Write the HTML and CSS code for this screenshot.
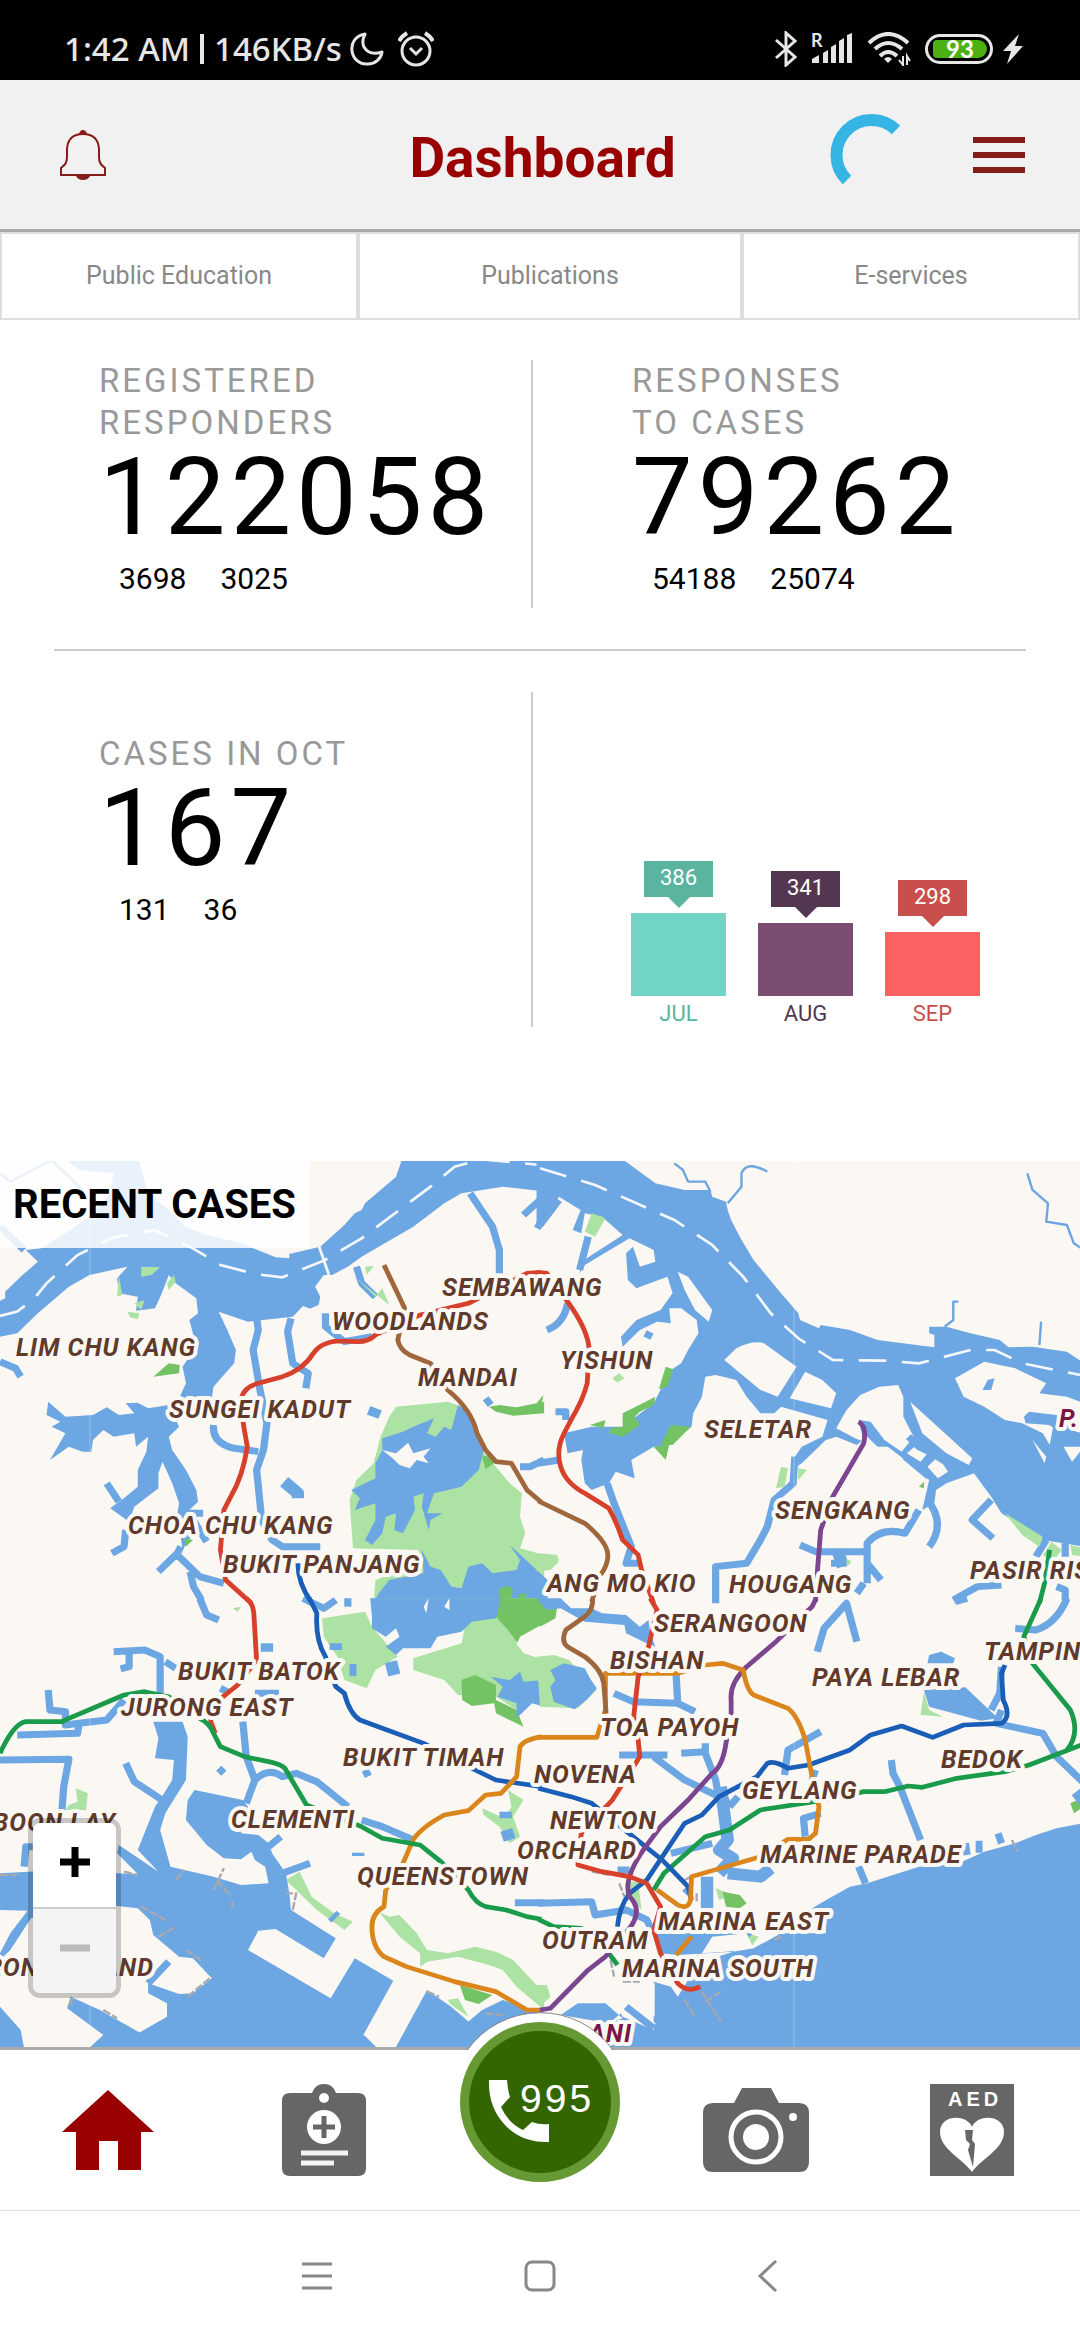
FILE: index.html
```html
<!DOCTYPE html>
<html lang="en">
<head>
<meta charset="utf-8">
<meta name="viewport" content="width=device-width, initial-scale=1">
<title>Dashboard</title>
<link rel="stylesheet" href="styles.css">
</head>
<body>
<div class="statusbar">
  <div class="statusbar-group statusbar-left">
    <span>1:42 AM</span><span class="statusbar-rule"></span><span>146KB/s</span>
    <svg width="34" height="34" viewBox="0 0 34 34" aria-hidden="true"><path d="M15 2C5 4 1 11 2 19c1 8 8 14 16 13 7 0 13-5 14-12-9 3-15 0-18-5-2-4-1-9 1-13z" fill="none" stroke="#e6e6e6" stroke-width="3" stroke-linejoin="round"/></svg>
    <svg class="alarm" width="36" height="36" viewBox="0 0 36 36" aria-hidden="true"><g fill="none" stroke="#e6e6e6" stroke-width="3"><circle cx="18" cy="20" r="14"/><path d="M1 10Q4 5 9 2M27 2q5 3 8 8" stroke-width="4"/><path d="M12 17l6 6 6-6"/></g></svg>
  </div>
  <div class="statusbar-group statusbar-right">
    <svg width="22" height="36" viewBox="0 0 22 36" aria-hidden="true"><path d="M1 9l19 17-9 8V2l9 8L1 27" fill="none" stroke="#e6e6e6" stroke-width="3"/></svg>
    <svg class="signal" width="42" height="32" viewBox="0 0 42 32" aria-hidden="true"><path d="M1 26l7-4v8H1zM12 20l5-3v13h-5zM20 14l5-3v19h-5zM28 8l5-3v25h-5zM36 2l5-2v30h-5z" fill="#e6e6e6"/><text x="0" y="14" font-size="18">R</text></svg>
    <svg class="wifi" width="44" height="34" viewBox="0 0 44 34" aria-hidden="true"><g fill="none" stroke="#e6e6e6" stroke-width="4"><path d="M2 11Q21-7 41 11M8 17q13-12 27 0M13 24q8-8 17 0"/></g><path d="M17 27q4-4 8 0l-4 4z" fill="#e6e6e6"/><path d="M36 24v9l-4-5M40 33v-9l3 5" fill="none" stroke="#e6e6e6" stroke-width="2"/></svg>
    <span class="battery"><span class="battery-fill">93</span></span>
    <svg class="bolt" width="20" height="30" viewBox="0 0 20 30" aria-hidden="true"><path d="M16 0L0 17h8L4 30l16-18h-8z" fill="#e6e6e6"/></svg>
  </div>
</div>

<header class="header">
  <button class="icon-button" aria-label="Notifications">
    <svg width="46" height="50" viewBox="0 0 46 50"><path d="M7 27V19Q8 4 23 4t16 15v8c0 6 2 8 6 11v7H1v-7c4-3 6-5 6-11z" fill="none" stroke="#851c17" stroke-width="2"/><path d="M19 4q1-4 4-4t4 4zM16 46h14q-2 4-7 4t-7-4z" fill="#851c17"/></svg>
  </button>
  <h1 class="title">Dashboard</h1>
  <div class="header-actions">
    <svg width="82" height="82" viewBox="0 0 82 82" role="img" aria-label="Loading"><path d="M66 16A35 35 0 0 0 17 66" fill="none" stroke="#36b5e5" stroke-width="12"/></svg>
    <button class="icon-button" aria-label="Menu">
      <svg width="52" height="36" viewBox="0 0 52 36"><path d="M0 3h52M0 18h52M0 33h52" stroke="#851c17" stroke-width="6"/></svg>
    </button>
  </div>
</header>

<nav class="tabs">
  <a class="tab" href="#education">Public Education</a>
  <a class="tab" href="#publications">Publications</a>
  <a class="tab" href="#services">E-services</a>
</nav>

<main>
<section class="stats">
  <div class="stats-row">
    <div class="stat stat-divided">
      <h2 class="stat-label">REGISTERED<br>RESPONDERS</h2>
      <p class="stat-value">122058</p>
      <p class="stat-parts"><span>3698</span><span>3025</span></p>
    </div>
    <div class="stat">
      <h2 class="stat-label">RESPONSES<br>TO CASES</h2>
      <p class="stat-value">79262</p>
      <p class="stat-parts"><span>54188</span><span>25074</span></p>
    </div>
  </div>
  <hr class="rule">
  <div class="stats-row">
    <div class="stat stat-divided stat-cases">
      <h2 class="stat-label">CASES IN OCT</h2>
      <p class="stat-value">167</p>
      <p class="stat-parts"><span>131</span><span>36</span></p>
    </div>
    <div class="chart">
      <div class="month jul"><span class="tip">386</span><span class="bar" style="height:83px"></span><span class="month-name">JUL</span></div>
      <div class="month aug"><span class="tip">341</span><span class="bar" style="height:73px"></span><span class="month-name">AUG</span></div>
      <div class="month sep"><span class="tip">298</span><span class="bar" style="height:64px"></span><span class="month-name">SEP</span></div>
    </div>
  </div>
</section>

<section class="map">
<svg class="map-canvas" viewBox="0 0 1080 886" role="img" aria-label="Map of recent cases in Singapore">
  <rect width="1080" height="886" fill="#fbf8f3"/>
  <!-- north-west -->
  <g transform="translate(0 -11) scale(.3444 .3333)">
    <path class="water" d="M180 20L230 60 330 70 320 130 260 200 190 250 120 295 75 300 110 335 60 380 15 425 15 445 0 452V560L50 550 110 490 200 410 260 375 370 350 340 385 345 430 400 440 395 482 450 475 470 430 490 375 510 400 570 445 575 490 550 510 570 590 530 650 540 700 520 745 615 745 620 710 680 640 685 600 660 540 635 485 720 515 850 500 880 468 900 476 925 465 930 440 915 410 940 375 965 375 1010 350 1050 320 1200 230 1290 160 1340 130 1460 110 1590 125V20H1170L1150 80 1060 160 1050 180 1030 190 1000 225 930 290 840 312 840 325 800 322 700 280 600 255 540 230 490 180 430 130 400 20z"/>
    <path class="water" d="M140 755L190 800 270 795 310 772 345 795 390 790 365 760 400 758 430 775 490 765 520 830 490 860 500 900 540 960 570 1020 575 1055 540 1090 555 1160 530 1200 515 1090 520 1060 500 1000 472 935 460 970 460 1015 390 1070 375 1115 320 1075 365 1040 400 1010 400 960 425 905 430 860 395 890 390 850 330 860 300 840 270 870 265 905 240 905 200 890 145 930 190 850 150 830 175 815 135 795z"/>
    <path class="stream" d="M310 1000L345 1055M365 1140L360 1190 325 1210M545 1090H590M555 1100L600 1175M525 1190L515 1210 460 1265M515 1215L580 1280 650 1300M552 1265L562 1310 585 1350M745 505L750 540 735 600 755 720 775 820 765 900 745 960 760 1110 790 1170 820 1190H930M845 505L835 545 850 640 895 670 888 715M620 825Q615 880 680 895L750 905M1365 130L1430 230 1450 300V370M1035 350L1050 400 1090 440M1568 150L1520 195M1575 205L1560 235M0 635L45 655 60 680M1410 745L1425 765M1510 950H1540L1580 930M945 490V530L1000 575 1080 560M0 230L70 300"/>
    <path class="stream wide" d="M825 995L865 1030V1045M1092 775L1082 800"/>
    <path class="stream fine" d="M0 70L30 95 150 30 240 120"/>
    <path class="park" d="M1150 770L1300 755 1340 770 1380 830 1400 900 1440 950 1480 1000 1515 1030 1510 1100 1525 1150 1510 1195 1580 1215V1360H1085L1090 1290 1220 1240 1215 1200 1025 1195 1015 1050 1035 990 1085 940 1105 860 1130 800zM410 350L465 352 440 375 410 380zM345 375L340 440 355 435zM485 400L505 375 510 395 490 420zM370 485L405 490 400 508 378 502zM390 460L420 450 410 480zM1060 350L1085 348 1065 375zM1100 430L1130 465M1035 385L1130 465 1110 415 1090 440z"/>
    <path class="water" d="M1200 830L1260 805 1240 850 1265 860 1290 830 1310 840 1330 765 1365 790 1405 900 1390 960 1340 1010 1300 1020 1260 1030 1240 1090 1285 1090 1250 1110 1245 1140 1225 1070 1230 1030 1200 1040 1205 1080 1170 1150 1145 1140 1150 1090 1120 1100 1110 1150 1080 1185 1060 1170 1090 1110 1090 1060 1030 1080 1045 1045 1020 1020 1090 985 1090 940 1110 900 1110 865 1170 845z"/>
    <path class="land" d="M1110 900L1150 910 1185 878 1200 910 1250 895 1230 920 1245 940 1210 930 1190 955 1160 945 1140 925z"/>
    <path class="water" d="M1130 1290L1230 1270 1225 1200 1250 1250 1280 1260 1310 1310 1340 1315 1360 1250 1400 1240 1430 1270 1500 1260 1510 1230 1480 1185 1590 1290V1365H1080L1100 1330z"/>
    <path class="forest" d="M1450 1315L1480 1308 1490 1325 1480 1355H1450zM1500 1335L1530 1330 1520 1355zM1420 770L1450 765 1500 772 1580 755V790L1490 797 1440 785zM1400 920L1420 915 1440 935 1410 958zM445 680L490 640 522 645 520 670zM535 1165L560 1170 540 1190z"/>
    <path class="lane" d="M0 498L50 485 100 445 135 400 225 315 330 262 450 240 560 295 640 345 740 372 820 382 940 332 1050 265 1250 110 1320 50 1400 28 1568 45"/>
    <path class="lane causeway" d="M925 285L955 375"/>
  </g>
  <!-- north-east -->
  <g transform="translate(540 -11) scale(.3444 .3333)">
    <path class="water" d="M-10 20H230L335 100 420 120 495 120 500 140 540 155 545 180 555 210 580 260 620 330 700 430 750 490 755 510 810 535 815 525 900 540 980 570 1145 592V555L1130 550V530H1180L1250 550 1335 570 1360 592 1430 590 1530 605 1580 640V1190L1520 1180 1460 1170 1340 1090 1310 1040 1260 970 1180 1000 1150 1020 1145 1060 1110 1080 1130 990 1060 930 1010 890 980 890 950 860 920 885 860 860 830 870 760 940 745 950 740 920 760 890 820 860 835 810 700 770 680 790 640 790 600 740 570 690 510 675 480 680 470 740 445 790 440 830 370 890 330 890 265 930 275 985 220 965 200 1000 150 1020 130 1000 120 930 125 900 80 910 70 850 150 830 240 830 330 760 380 660 410 640 430 600 460 550 455 510 410 475 375 475 380 520 340 515 290 540 240 590 235 560 280 510 350 480 385 430 370 380 280 415 255 390 250 310 270 290 290 350 335 335 330 300 260 265 130 345 115 370 120 335 240 255 180 200 130 190 120 250 95 240 118 180 55 140 0 230H-10z"/>
    <path class="land" d="M400 365L430 380 500 480 490 515 450 480 420 420zM535 630L570 595Q620 570 650 580L745 650 690 740 640 720zM770 665L820 690 860 730 845 775 725 745zM860 835L890 780 930 735 985 710 1040 705 1055 740V800L1085 860 1050 905 1000 870 960 815 925 810 940 875 915 865zM1075 755L1255 925 1245 945 1180 910 1110 850zM1100 880L1125 910 1105 935 1065 910zM1155 920L1185 965 1155 985 1125 950zM1205 685L1290 635 1380 655 1470 700 1450 730 1530 740 1580 760V850L1490 830 1480 885 1460 850 1400 820 1350 810 1290 770 1230 740zM1430 870L1470 920 1465 940zM1520 890L1545 935 1580 890z"/>
    <path class="water" d="M1300 690L1320 685 1310 720 1285 720zM1405 800L1420 785 1500 795 1560 850 1520 860 1480 825 1410 820z"/>
    <path class="stream" d="M195 1000L215 1060 265 1190 250 1240H290M-5 940L55 930M45 785H75L75 810M20 540Q70 520 80 460M55 150L0 225M140 260L115 360M740 920L735 1000 680 1050 660 1130 640 1170 600 1240 510 1250V1360M755 1185L800 1205H940M845 1240H890M950 1300V1180Q990 1130 1060 1150L1100 1080M1125 1050Q1180 1120 1130 1190M950 1240L990 1290M940 1300L920 1330M1310 1050L1255 1110 1315 1165M1200 1350L1270 1310 1340 1305M1500 1310L1525 1320V1350M1470 1170L1440 1220M1525 1180V1220M1070 860L1100 890 1140 910 1170 930 1240 960M1060 920L1130 980M305 550L325 560"/>
    <path class="stream wide" d="M865 1205L880 1250"/>
    <path class="stream fine" d="M660 65Q600 30 585 70V110L545 160M390 40L415 60 430 95 480 95 495 125M1415 70L1430 120 1475 160 1470 215 1530 225 1550 280 1580 300M1215 455H1200V510L1175 530M1455 515L1450 585"/>
    <path class="park" d="M150 190L190 205 160 260 130 245zM700 950L720 955 710 1010 685 1015zM750 955L775 960 750 990zM1350 1090L1460 1160 1450 1190 1400 1155zM1485 1175L1515 1200 1490 1235 1460 1215zM1540 1185L1580 1195V1220L1545 1215zM0 1210L50 1215 55 1235 30 1260-10 1265zM210 685L230 670 245 685 225 698zM890 1225L905 1235 890 1250z"/>
    <path class="forest" d="M365 650L387 658 370 710 345 718zM335 740L330 765 290 785 275 800 290 825 240 860 200 850 205 835 240 830 240 790zM380 825L438 830 385 885 350 885zM330 890L375 885 365 930zM145 825L190 810 185 835zM1100 1010L1115 995V1015zM-10 760L10 735 0 785z"/>
    <path class="lane" d="M0 55L160 105 390 210 500 285 590 380 670 490 750 565 850 630 1000 632 1100 640 1250 600 1320 600 1400 640 1568 675"/>
  </g>
  <!-- south-west -->
  <g transform="translate(0 439) scale(.3444 .3333)">
    <path class="park" d="M935 55L1060 35 1080 80 1130 140 1155 170 1090 210 1065 265 1000 240 980 170 940 110zM1080-5H1580V70L1500 130 1520 160 1580 180V260L1500 330 1440 290 1330 285 1290 240 1200 210V175L1340 130 1350 80 1090 30zM200 615L225 605 220 565 255 580 250 630H190zM830 840L870 815 905 890 970 940 1025 965 1000 990 920 930zM1100 935L1130 950 1160 945 1210 1000 1240 1050 1300 1060 1380 1040 1440 1055 1490 1080 1580 1180V1230L1500 1160 1460 1110 1420 1095 1330 1070 1240 1085 1220 1100 1220 1060 1160 1010zM1400 625L1465 655 1485 620 1475 570 1520 600 1490 650 1510 710 1480 730 1450 680 1405 645zM1300 1200L1330 1195 1360 1250 1310 1215zM675 25L700 20 690 35z"/>
    <path class="forest" d="M1440-5H1580V80L1500 125 1475 90 1440 50zM1340 240L1380 225 1440 255 1440 300 1500 330 1520 380 1440 340 1435 310 1370 318 1342 300zM1335 1155L1430 1185 1390 1212 1350 1200z"/>
    <path class="water" d="M1075-5L1080 50 1080 85 1120 110 1150 85 1160 110 1120 140 1150 165 1170 145 1250 145 1270 110 1340 95 1370 65 1440 55 1455-5zM1425 230L1480 240 1510 215 1520 245 1580 240V320L1545 310 1500 355 1500 310 1445 290 1460 260z"/>
    <path class="land" d="M1230 20L1245-5 1238 40zM1290 20L1305-5V30zM1580 70L1510 110 1500 135 1530 160 1580 165z"/>
    <path class="water" d="M0 820L140 812 400 822 340 760 345 735 460 815 400 750 450 620 470 590 500 540 505 480 450 475 460 415 445 365H530L545 410 540 540 480 640 465 690 495 800 620 830 700 855 780 850 770 800 740 780 730 755 700 778 650 775 600 735 540 660 545 600 565 570 705 600 720 620 700 700 750 705 780 730 790 760 830 820 840 880 845 930 975 1015 940 1075 800 987 750 992 720 1050 960 1195 1030 1075 1142 1142 1055 1305 1130 1350H1145L1240 1170 1310 1220 1360 1265 1400 1230 1460 1200 1580 1240V1400H0z"/>
    <path class="land" d="M0 930L80 932 30 1000 0 1060zM1055 1303L1100 1300 1150 1330 1138 1360H1110zM90 955L30 1050 0 1080V1220L60 1290 80 1400H200L300 1305 195 1225 205 1190 290 1230 405 1298 485 1250V1210L430 1180V1150L520 1182 560 1180 615 1135 560 1075 520 1070 445 1005 435 960 400 925 340 918z"/>
    <path class="stream" d="M330 155L420 150 465 170V280M375 160V200L350 207M140 270L145 330 190 335V375L230 370 310 360 360 300M50 405L225 400 230 370M0 480L200 478 185 560 180 630M365 490L390 545 470 600M705 365L715 470 740 540 715 610M740 540Q780 500 820 530L860 520 920 545 1010 620M1050 660L1110 680 1200 720M580-5L600 45 635 60M820 820L900 790M780 740L815 710M1495 908H1580M635 520L650 505M1055 525L1075 515M70 800L75 740H95M430 1150L490 1085M880-5L940 25 975 0M1010-5V20M480 185L510 205M640 265L660 275M740 280H810"/>
    <path class="stream wide" d="M775 130V155M975 130V150M1015 210H1035M1135 185L1145 225M1470 690L1480 720M1468 635V655M965 945L975 955M1040 758V768"/>
    <path class="pier" d="M0 825L50 825M360 815L400 825M510 840L535 810M620 870L650 805M630 840L670 890M675 905V925M410 920L480 960M460 1010L510 980M540 1050L590 1085M545 1190L615 1130M850 930L860 880 830 880M210 1195L200 1220M300 1230L340 1255M1240 1175L1275 1190M1410 1240L1460 1245"/>
  </g>
  <!-- south-east -->
  <g transform="translate(540 439) scale(.3444 .3333)">
    <path class="park" d="M-10 170L40 165 85 180 120 225 165 270 110 325 0 320zM510 865L560 885 520 900zM600 1000L635 1010 610 1045 590 1030zM455 1070L470 1020 495 1010 480 1040zM1115 275L1130 330 1170 350 1105 345zM-10 1155L20 1155 30 1190 0 1220zM255 845H285L295 930 270 900z"/>
    <path class="forest" d="M530 875L580 885 600 910 580 925 540 920zM-10 20L50 20 45 55 0 80zM1540 610L1580 590V620L1550 640z"/>
    <path class="water" d="M30 210L70 190 130 205 145 235 165 265 135 300 100 328 40 305 30 260 45 240zM-10-5H60L90 25 150 25 180 40 250 45 290 80 315 60 320 100 335 140 300 125 250 100 245 75 130 65 60 25 20 30zM1130 165L1165 155 1205 175 1200 190H1125zM1115 270L1235 262 1310 335 1330 355 1280 362 1130 320zM1600 665L1500 685 1440 705 1380 730 1290 755 1215 790 1100 800 950 850 900 860 840 895 790 925 830 950V1000H700L620 1045 560 1055 460 1090 400 1190 380 1160 330 1145V1285L250 1225 265 1215 200 1270 60 1245 110 1210H190L240 1255 150 1290 150 1400H1600zM330 1000H620L560 1055 400 1065 350 1060z"/>
    <path class="land" d="M500 1010L600 1000 620 1045 540 1055 470 1060zM240 1250L330 1290 335 1270 280 1220 300 1215 333 1250V1150H220V1210z"/>
    <path class="stream" d="M230 465H370M330 470L420 540 500 580 540 600V740M410 460L480 455V430M480 460L510 540 520 600M550 620L575 590M710 525L720 450 815 395M800 510L790 540M770 710L765 655 815 640M215 280L270 305 400 310 450 335M395 220L400 310M805 155L825 85 890 10 920 125M1340 330L1325 370 1460 400 1500 470 1575 545M1340 200L1335 280 1310 330M1380 85L1440 90Q1500 70 1530-5M1020 480L1025 520 1045 560 1105 720M925 800L945 850M1235 730L1240 765M1330 700L1340 730M-5 910L150 905 160 945 250 930 310 960 330 1000M380 760L500 730M420 880L430 870M250 1220L330 1285M1205 5L1240-5M225 810H260"/>
    <path class="stream wide" d="M525 560L545 720 520 750 560 775 520 820M545 820L640 830 670 805M485 830V925M1265 740H1285M1555 600L1580 580"/>
    <path class="pier" d="M440 830L420 840M455 880V910M150 815L200 825M230 850L245 890M205 1080L215 1130M240 1145H290M420 1200L450 1250M470 1175L525 1265M480 1205L525 1175M1370 720L1388 755M680 1020L700 1010"/>
  </g>
  <!-- tile seams -->
  <path d="M90 0V886M794 0V886" stroke="#fff" stroke-opacity=".3" fill="none"/>
  <!-- rail lines, upper half -->
  <g class="rail" transform="translate(0 -11) scale(.3444 .3333)">
    <path class="nsl" d="M1568 367L1530 370 1360 460 1220 495 1090 555Q1070 575 1040 575L980 573Q930 578 910 610 880 660 820 680L750 700Q710 710 700 745L707 825 718 890Q705 980 670 1040L650 1080 640 1200 655 1290 730 1360"/>
    <path class="tel" d="M1115 345L1175 475 1155 570Q1160 600 1190 615L1250 640 1300 720Q1370 780 1385 850L1410 900 1440 935 1485 940 1530 1020 1572 1057"/>
    <path class="dtl" d="M865 1240Q865 1300 903 1355"/>
  </g>
  <g class="rail" transform="translate(540 -11) scale(.3444 .3333)">
    <path class="nsl" d="M-5 367L20 370 80 455Q140 540 143 600L137 700Q125 750 90 810L70 850Q45 900 60 950 75 1000 130 1030L200 1075Q220 1110 240 1170L285 1215 295 1260 330 1360"/>
    <path class="tel" d="M-5 1053L130 1120Q200 1180 197 1220 195 1250 175 1275L150 1355"/>
    <path class="nel" d="M925 815Q950 830 940 880L850 1040 815 1140 805 1270 800 1355"/>
    <path class="ewl" d="M1480 1200L1465 1300 1450 1360"/>
  </g>
  <!-- rail lines, lower half -->
  <g class="rail" transform="translate(0 439) scale(.3444 .3333)">
    <path class="nsl" d="M715-5Q735 10 737 40L745 180 690 255 612 320V365L625 400"/>
    <path class="dtl" d="M898-5L920 40Q915 120 945 170L975 260 1000 280Q1015 340 1045 360L1230 430 1380 510 1440 540 1572 560"/>
    <path class="ccl" d="M1572 410Q1520 420 1510 440L1500 530 1455 580 1410 585 1360 632 1290 645Q1210 690 1195 730L1170 790 1120 870 1115 920Q1080 940 1080 980 1080 1040 1115 1070L1180 1100 1320 1145 1440 1175 1530 1230H1572"/>
    <path class="ewl" d="M0 460Q40 370 75 365L180 365 200 355 360 285 420 275 490 290 580 355Q610 370 620 400L640 440 710 470 780 485Q825 495 830 510L890 615 1050 680 1110 715 1220 735 1280 785 1360 870Q1380 910 1410 920L1470 930 1530 950 1572 958"/>
  </g>
  <g class="rail" transform="translate(540 439) scale(.3444 .3333)">
    <path class="ewl" d="M-5 958L40 980 120 985 200 1060 225 1095M330 870L360 820 480 710 550 690 640 630 830 600 940 575 1000 575 1070 558 1110 562 1210 535 1350 515 1420 495 1572 435M1455-5L1405 110 1430 190 1540 330Q1570 400 1530 450"/>
    <path class="dtl" d="M-5 565L90 590 150 610 270 710 355 780 430 860 440 900M225 980Q230 920 260 880L310 840 420 670 470 645 520 590 630 530 660 490Q680 480 720 505L780 495 900 450 960 405 1050 378 1140 412 1230 375 1340 370Q1370 350 1345 300L1340 220 1350 195"/>
    <path class="nel" d="M802-5L790 20 680 130 600 200Q550 250 555 300V340L540 430Q530 500 500 520L430 600 350 680 300 750Q240 840 260 890 300 930 260 985L190 1070 140 1110 30 1225 0 1230"/>
    <path class="ccl" d="M-5 412H165L190 330V220L400 220 480 195 530 190 590 210Q600 270 620 285L720 325Q750 350 770 420L790 530 810 620 800 700 780 718 720 718 640 770 540 800 440 830 437 900Q430 930 400 915L340 870M440 1010L395 1065"/>
    <path class="tel" d="M153-5Q155 30 130 50L75 90Q60 125 80 140L130 170Q180 210 185 250L192 340"/>
    <path class="nsl" d="M320-5L340 30 315 140 285 230 272 350 285 420 290 470 210 600 120 700 110 795 180 815 260 830 310 850 350 920 330 990 350 1060 400 1150Q430 1180 465 1160"/>
  </g>
  <g class="place">
    <text x="16" y="195">LIM CHU KANG</text><text x="169" y="257">SUNGEI KADUT</text><text x="128" y="373">CHOA CHU KANG</text><text x="223" y="412">BUKIT PANJANG</text>
    <text x="442" y="135">SEMBAWANG</text><text x="332" y="169">WOODLANDS</text><text x="418" y="225">MANDAI</text><text x="560" y="208">YISHUN</text>
    <text x="704" y="277">SELETAR</text><text x="775" y="358">SENGKANG</text><text x="547" y="431">ANG MO KIO</text><text x="729" y="432">HOUGANG</text><text x="970" y="418">PASIR RIS</text>
    <text x="178" y="519">BUKIT BATOK</text><text x="121" y="555">JURONG EAST</text><text x="343" y="605">BUKIT TIMAH</text><text x="231" y="667">CLEMENTI</text>
    <text x="116" y="670" text-anchor="end">BOON LAY</text><text x="357" y="724">QUEENSTOWN</text><text x="154" y="815" text-anchor="end">JURONG ISLAND</text>
    <text x="654" y="471">SERANGOON</text><text x="610" y="508">BISHAN</text><text x="600" y="575">TOA PAYOH</text><text x="534" y="622">NOVENA</text><text x="550" y="668">NEWTON</text><text x="517" y="698">ORCHARD</text>
    <text x="542" y="788">OUTRAM</text><text x="658" y="769">MARINA EAST</text><text x="622" y="816">MARINA SOUTH</text><text x="760" y="702">MARINE PARADE</text><text x="742" y="638">GEYLANG</text>
    <text x="812" y="525">PAYA LEBAR</text><text x="941" y="607">BEDOK</text><text x="984" y="499">TAMPINES</text>
    <g class="islet"><text x="1059" y="266">P.</text><text x="632" y="881" text-anchor="end">ANI</text></g>
  </g>
</svg>
<h2 class="map-title">RECENT CASES</h2>
<div class="zoom">
  <button class="zoom-button" aria-label="Zoom in"><svg width="30" height="30" viewBox="0 0 30 30"><path d="M0 15h30M15 0v30" stroke="#000" stroke-width="7"/></svg></button>
  <button class="zoom-button" aria-label="Zoom out" disabled><svg width="30" height="30" viewBox="0 0 30 30"><path d="M0 15h30" stroke="#bbb" stroke-width="7"/></svg></button>
</div>
</section>
</main>

<nav class="bottom-nav">
  <a class="nav-item" href="#home" aria-label="Home"><svg width="92" height="80" viewBox="0 0 92 80"><path d="M46 0L92 42H79V80H56V51H37V80H14V42H0z" fill="#900"/></svg></a>
  <a class="nav-item" href="#records" aria-label="Records"><svg width="84" height="92" viewBox="0 0 84 92"><path d="M8 9H30Q33 0 42 0t12 9H76q8 0 8 8V84q0 8-8 8H8q-8 0-8-8V17Q0 9 8 9z" fill="#666"/><circle cx="42" cy="14" r="5" fill="#fff"/><circle cx="42" cy="43" r="17" fill="#fff"/><path d="M31 43H53M42 32V54" stroke="#666" stroke-width="5"/><path d="M19 69H66M19 79H52" stroke="#f4f4f4" stroke-width="5"/></svg></a>
  <div class="nav-item">
    <button class="call" aria-label="Call 995">
      <svg width="180" height="180" viewBox="0 0 180 180"><circle cx="90" cy="91" r="89" fill="#fff"/><path d="M17 39A90 90 0 0 1 163 39" fill="none" stroke="#888" stroke-width="1"/><circle cx="90" cy="91" r="80" fill="#693"/><circle cx="90" cy="91" r="71" fill="#360"/><path d="M39 69H57Q58 81 60 86L51 96Q58 112 73 119L82 111Q90 114 99 113V131Q72 132 55 114 38 96 39 69z" fill="#fff"/><text class="call-number" x="70" y="101">995</text></svg>
    </button>
  </div>
  <a class="nav-item" href="#camera" aria-label="Camera"><svg width="106" height="84" viewBox="0 0 106 84"><path d="M10 15H31L39 0H68L76 15H96q10 0 10 10V74q0 10-10 10H10Q0 84 0 74V25Q0 15 10 15z" fill="#666"/><circle cx="53" cy="49" r="25" fill="none" stroke="#fff" stroke-width="5"/><circle cx="53" cy="49" r="13" fill="#fff"/><circle cx="90" cy="29" r="4" fill="#fff"/></svg></a>
  <a class="nav-item" href="#aed" aria-label="AED locations"><svg width="84" height="92" viewBox="0 0 84 92"><rect width="84" height="92" fill="#666"/><text class="aed-text" x="18" y="22">AED</text><path d="M42 43C37 30 10 30 10 48 10 65 32 74 42 88 52 74 74 65 74 48 74 30 47 30 42 43z" fill="#fff"/><path d="M35 46H43L42 56 45 60 43 83 38 66 40 60 36 56z" fill="#666"/></svg></a>
</nav>

<nav class="system-nav" aria-label="System">
  <button class="icon-button" aria-label="Recent apps"><svg width="32" height="32" viewBox="0 0 32 32"><path d="M1 4H31M1 16H31M1 28H31" stroke="#888" stroke-width="3"/></svg></button>
  <button class="icon-button" aria-label="Home screen"><svg width="32" height="32" viewBox="0 0 32 32"><rect x="2" y="2" width="28" height="28" rx="6" fill="none" stroke="#888" stroke-width="3"/></svg></button>
  <button class="icon-button" aria-label="Back"><svg width="32" height="32" viewBox="0 0 32 32"><path d="M29 1L13 16 29 31" fill="none" stroke="#888" stroke-width="3"/></svg></button>
</nav>
</body>
</html>
```
FILE: styles.css
```css
* { box-sizing: border-box; margin: 0; }

body {
  display: flex;
  flex-direction: column;
  background: #fff;
  font-family: Roboto, "Liberation Sans", sans-serif;
  color: #000;
}

svg { display: block; flex: none; }

button { border: 0; padding: 0; background: none; font: inherit; }

.statusbar {
  display: flex;
  justify-content: space-between;
  align-items: center;
  height: 80px;
  padding: 18px 57px 0 64px;
  background: #000;
  color: #e6e6e6;
  font-family: "Noto Sans", sans-serif;
  font-size: 33px;
  font-weight: 500;
  line-height: 62px;
}

.statusbar-group { display: flex; align-items: center; }
.statusbar-left { gap: 8px; }
.statusbar-right { gap: 14px; }
.statusbar-rule { width: 4px; height: 30px; margin: 0 2px; background: #e6e6e6; }
.alarm { margin-left: 6px; }
.bolt { margin-left: -4px; }
.signal text { fill: #e6e6e6; font-family: Lato, sans-serif; font-weight: 700; }

.battery {
  display: block;
  width: 68px;
  height: 30px;
  padding: 3px;
  border: 3px solid #e6e6e6;
  border-radius: 15px;
}

.battery-fill {
  display: block;
  height: 18px;
  margin: 0 0 0 2px;
  border-radius: 4px 9px 9px 4px;
  background: #4caf12;
  color: #fff;
  font-family: Lato, sans-serif;
  font-size: 24px;
  font-weight: 700;
  line-height: 18px;
  text-align: center;
}

.header {
  display: grid;
  grid-template-columns: 1fr auto 1fr;
  align-items: center;
  height: 152px;
  padding: 0 55px 0 60px;
  border-bottom: 3px solid #aaa;
  background: #f1f1f1;
}

.title { padding: 6px 0 0; color: #900; font-size: 55px; line-height: 64px; font-weight: 700; }

.header-actions { display: flex; justify-content: flex-end; align-items: center; gap: 61px; }

.tabs { display: grid; grid-template-columns: 358fr 384fr 338fr; }

.tab {
  border: 2px solid #ddd;
  color: #888;
  font-size: 25px;
  line-height: 84px;
  text-align: center;
  text-decoration: none;
}

.stats { padding: 40px 0 134px; }
.stats-row { display: grid; grid-template-columns: 533fr 547fr; }
.rule { height: 2px; margin: 41px 54px; border: 0; background: #ccc; }
.stat { padding-left: 99px; }
.stat-divided { border-right: 2px solid #ccc; }
.stat-cases { padding-top: 41px; padding-bottom: 88px; }

.stat-label { color: #999; font-size: 33px; font-weight: 400; line-height: 42px; letter-spacing: 3px; }
.stat-value { font-size: 108px; line-height: 106px; letter-spacing: 5px; }
.stat-parts { display: flex; gap: 34px; padding-left: 20px; font-size: 30px; line-height: 58px; }

.chart { display: flex; align-items: flex-end; gap: 32px; padding-left: 98px; }

.month { display: flex; flex-direction: column; align-items: center; width: 95px; font-size: 22px; }

.tip {
  position: relative;
  width: 69px;
  margin-bottom: 16px;
  padding-bottom: 2px;
  background: var(--dark);
  color: #fff;
  line-height: 34px;
  text-align: center;
}

.tip::after {
  content: "";
  position: absolute;
  top: 100%;
  left: 50%;
  margin-left: -11px;
  border: 11px solid transparent;
  border-top-color: var(--dark);
  border-bottom: 0;
}

.bar { width: 100%; background: var(--light); }
.month-name { margin-top: 5px; color: var(--dark); line-height: 26px; }
.jul { --light: #71d4c5; --dark: #5ab49f; }
.aug { --light: #7b4d72; --dark: #533750; }
.sep { --light: #fa6262; --dark: #c84f4b; }

.map { position: relative; }
.map-canvas { width: 100%; height: auto; }

.water { fill: #6ca6e3; }
.land { fill: #fbf8f3; }
.park { fill: #ace2a3; }
.forest { fill: #73c365; }
.stream { fill: none; stroke: #6ca6e3; stroke-width: 21; stroke-linejoin: round; }
.stream.wide { stroke-width: 36; }
.stream.fine { stroke-width: 7; }
.lane { fill: none; stroke: #f4f8fd; stroke-width: 8; stroke-dasharray: 80 45; }
.lane.causeway { stroke-dasharray: none; }
.pier { fill: none; stroke: #a9a9ad; stroke-width: 7; stroke-dasharray: 24 6; }
.rail { fill: none; stroke-width: 14; stroke-linejoin: round; }
.nsl { stroke: #d7402b; }
.tel { stroke: #a0673c; }
.dtl { stroke: #1a5eb8; }
.ccl { stroke: #db861d; }
.ewl { stroke: #1a9a4b; }
.nel { stroke: #7b4590; }

.place {
  fill: #603a2c;
  stroke: #fbf8f3;
  stroke-width: 8px;
  stroke-linejoin: round;
  paint-order: stroke;
  font-size: 25px;
  font-weight: 700;
  font-style: italic;
  letter-spacing: 1px;
}

.islet { fill: #7c1545; }

.map-title {
  position: absolute;
  top: 0;
  left: 0;
  padding: 0 13px;
  background: rgba(255, 255, 255, .85);
  font-size: 40px;
  font-weight: 700;
  line-height: 87px;
}

.zoom {
  position: absolute;
  bottom: 49px;
  left: 28px;
  border: 5px solid rgba(0, 0, 0, .2);
  border-radius: 12px;
  background-clip: padding-box;
}

.zoom-button {
  display: flex;
  justify-content: center;
  align-items: center;
  width: 83px;
  height: 84px;
  padding-bottom: 6px;
  border-radius: 0 0 7px 7px;
  background: #fff;
}

.zoom-button:first-child { height: 86px; border-bottom: 2px solid #ccc; border-radius: 7px 7px 0 0; }
.zoom-button:disabled { background: #f4f4f4; }

.bottom-nav {
  display: grid;
  grid-template-columns: repeat(5, 1fr);
  height: 164px;
  border-top: 3px solid #aaa;
  border-bottom: 1px solid #ddd;
}

.nav-item { position: relative; display: flex; justify-content: center; align-items: center; }
.call { position: absolute; top: -39px; border-radius: 50%; }
.call-number { fill: #fff; font-family: "Liberation Sans", sans-serif; font-size: 39px; letter-spacing: 3px; }
.aed-text { fill: #fff; font-family: "Liberation Sans", sans-serif; font-size: 20px; font-weight: 700; letter-spacing: 4px; }

.system-nav { display: flex; justify-content: center; align-items: center; gap: 191px; height: 129px; }
```
